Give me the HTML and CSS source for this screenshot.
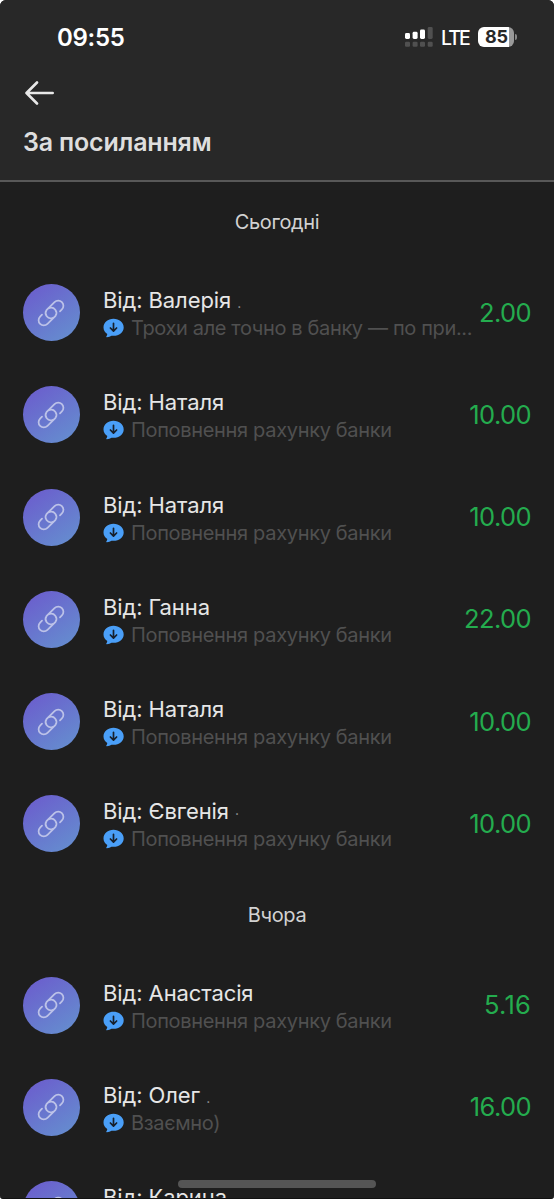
FILE: index.html
```
<!DOCTYPE html>
<html lang="uk">
<head>
<meta charset="utf-8">
<title>За посиланням</title>
<link rel="stylesheet" href="styles.css">
</head>
<body>
<svg class="defs" aria-hidden="true">
  <symbol id="link" viewBox="-15 -15 30 30">
    <g transform="rotate(-45)" fill="none" stroke="currentColor" stroke-width="1.75" stroke-linecap="round">
      <path d="M-2.400 4.600A5.200 5.200 0 0 1-1.200-5.200H10.200A5.200 5.200 0 0 1 10.200 5.200H7.500"/>
      <path d="M2.400-4.600A5.200 5.200 0 0 1 1.200 5.200H-10.200A5.200 5.200 0 0 1-10.200-5.200H-7.500"/>
    </g>
  </symbol>
  <symbol id="bubble" viewBox="0 0 20 20">
    <path fill="#4a9ff8" d="M10 .8C4.300.8 0 4.600 0 9.400c0 2.900 1.500 5.100 3.800 6.600-.1 1-.6 2-1 2.600-.2.500.1.800.6.700 1.800-.2 3.300-.9 4.600-1.600.7.100 1.300.1 2 .1 5.700 0 10.200-3.600 10.200-8.400S15.700.8 10 .8Z"/>
    <path fill="none" stroke="#17202c" stroke-width="1.700" stroke-linecap="round" stroke-linejoin="round" d="M10 5.300v7.600M6.900 10l3.100 3.100 3.100-3.100"/>
  </symbol>
</svg>
<main class="screen">
  <header class="header">
    <div class="status">
      <span class="time">09:55</span>
      <div class="indicators">
        <svg class="signal" width="28" height="20" viewBox="0 0 28 20">
          <g fill="#fff"><rect y="6" width="5" height="6" rx="1.400"/><rect x="7.600" y="4.800" width="5" height="7.200" rx="1.400"/><rect x="15" y="2.500" width="5" height="9.500" rx="1.400"/></g>
          <g fill="#505050"><rect x="22.700" width="5" height="12" rx="1.400"/><rect y="14.700" width="5" height="5" rx="1.200"/><rect x="7.600" y="14.700" width="5" height="5" rx="1.200"/><rect x="15" y="14.700" width="5" height="5" rx="1.200"/><rect x="22.700" y="14.700" width="5" height="5" rx="1.200"/></g>
        </svg>
        <span class="network">LTE</span>
        <div class="battery"><span class="level">85</span></div>
        <span class="battery-tip"></span>
      </div>
    </div>
    <svg class="back" width="30" height="24" viewBox="0 0 30 24"><path d="M27.700 12H1.800M12 1.500 1.500 12 12 22.500" fill="none" stroke="#e8e8e8" stroke-width="2.600" stroke-linecap="round" stroke-linejoin="round"/></svg>
    <h1 class="title">За посиланням</h1>
  </header>
  <h2 class="day today">Сьогодні</h2>
  <section class="list">
    <article class="row"><div class="avatar"><svg><use href="#link"/></svg></div><div class="info"><p class="name">Від: Валерія <span class="dot">.</span></p><p class="note"><svg><use href="#bubble"/></svg><span class="long">Трохи але точно в банку — по при...</span></p></div><span class="amount">2.00</span></article>
    <article class="row"><div class="avatar"><svg><use href="#link"/></svg></div><div class="info"><p class="name">Від: Наталя</p><p class="note"><svg><use href="#bubble"/></svg><span>Поповнення рахунку банки</span></p></div><span class="amount">10.00</span></article>
    <article class="row"><div class="avatar"><svg><use href="#link"/></svg></div><div class="info"><p class="name">Від: Наталя</p><p class="note"><svg><use href="#bubble"/></svg><span>Поповнення рахунку банки</span></p></div><span class="amount">10.00</span></article>
    <article class="row"><div class="avatar"><svg><use href="#link"/></svg></div><div class="info"><p class="name">Від: Ганна</p><p class="note"><svg><use href="#bubble"/></svg><span>Поповнення рахунку банки</span></p></div><span class="amount">22.00</span></article>
    <article class="row"><div class="avatar"><svg><use href="#link"/></svg></div><div class="info"><p class="name">Від: Наталя</p><p class="note"><svg><use href="#bubble"/></svg><span>Поповнення рахунку банки</span></p></div><span class="amount">10.00</span></article>
    <article class="row"><div class="avatar"><svg><use href="#link"/></svg></div><div class="info"><p class="name">Від: Євгенія <span class="dot">·</span></p><p class="note"><svg><use href="#bubble"/></svg><span>Поповнення рахунку банки</span></p></div><span class="amount">10.00</span></article>
  </section>
  <h2 class="day">Вчора</h2>
  <section class="list">
    <article class="row"><div class="avatar"><svg><use href="#link"/></svg></div><div class="info"><p class="name">Від: Анастасія</p><p class="note"><svg><use href="#bubble"/></svg><span>Поповнення рахунку банки</span></p></div><span class="amount loose">5.16</span></article>
    <article class="row"><div class="avatar"><svg><use href="#link"/></svg></div><div class="info"><p class="name">Від: Олег <span class="dot">.</span></p><p class="note"><svg><use href="#bubble"/></svg><span>Взаємно)</span></p></div><span class="amount">16.00</span></article>
    <article class="row"><div class="avatar"><svg><use href="#link"/></svg></div><div class="info"><p class="name">Від: Карина</p></div></article>
  </section>
  <div class="home-bar"></div>
</main>
</body>
</html>
```
FILE: styles.css
```
* { box-sizing: border-box; margin: 0; padding: 0; }
html, body { height: 1199px; overflow: hidden; background: #fff; }
body { font-family: Inter, "Open Sans", sans-serif; color: #e6e6e6; }
.defs { position: absolute; width: 0; height: 0; }
.screen { position: relative; height: 1199px; overflow: hidden; background: #1e1e1e; border-radius: 6px 6px 3px 3px; border-bottom: 1px solid #111; }
.header { height: 182px; padding: 22px 23px 0; background: #282828; border-bottom: 2px solid #585858; }
.status { display: flex; justify-content: space-between; align-items: center; height: 30px; padding: 0 14px 0 34px; color: #fff; }
.time { padding-top: 2px; font-size: 24px; font-weight: 600; line-height: 30px; letter-spacing: -0.3px; }
.indicators { display: flex; align-items: center; height: 20px; }
.network { margin-left: 8px; width: 37px; padding-top: 1px; font-size: 19.500px; font-weight: 500; line-height: 20px; letter-spacing: -1.9px; }
.battery { width: 36px; height: 20px; border-radius: 6px; background: linear-gradient(90deg, #fff 31px, #999 31px); }
.level { display: block; width: 36px; padding-left: 1px; text-align: center; font-size: 18px; font-weight: 700; line-height: 20px; color: #282828; }
.battery-tip { width: 2px; height: 6px; margin-left: 1px; border-radius: 0 2px 2px 0; background: #888; }
.back { display: block; margin: 28.500px 0 0 1.500px; }
.title { margin-top: 20.500px; font-size: 25px; font-weight: 600; line-height: 34px; letter-spacing: -0.18px; color: #dedede; }
.day { height: 79px; padding-top: 27px; text-align: center; font-size: 20px; font-weight: 400; line-height: 26px; letter-spacing: -0.35px; color: #d2d2d2; }
.day.today { height: 79.5px; }
.list { display: grid; grid-template-columns: minmax(0, 1fr); grid-auto-rows: 102.25px; }
.row { display: flex; align-items: flex-start; padding: 0 23px; }
.avatar { display: flex; align-items: center; justify-content: center; flex: none; width: 57px; height: 57px; margin-top: 22.500px; border-radius: 50%; background: linear-gradient(145deg, #6b5fcd 10%, #658ccf 90%); color: #bcc2e8; }
.avatar svg { width: 30px; height: 30px; margin-left: -1px; }
.info { flex: 1; min-width: 0; padding: 24.5px 0 0 23px; }
.name { height: 28px; font-size: 22px; line-height: 28px; letter-spacing: -0.1px; white-space: nowrap; }
.dot { font-size: 14px; line-height: 1; color: #999; }
.note { display: flex; align-items: center; gap: 7px; height: 28px; font-size: 20px; line-height: 28px; letter-spacing: -0.33px; color: #505050; white-space: nowrap; }
.note svg { width: 21px; height: 20px; flex: none; }
.long { letter-spacing: -0.36px; }
.amount { margin-top: 34px; font-size: 25.500px; line-height: 34px; letter-spacing: -0.6px; color: #24ac4e; }
.amount.loose { letter-spacing: 0.2px; }
.home-bar { position: absolute; left: 178px; top: 1180px; width: 198px; height: 8px; border-radius: 4px; background: #555; }
```
